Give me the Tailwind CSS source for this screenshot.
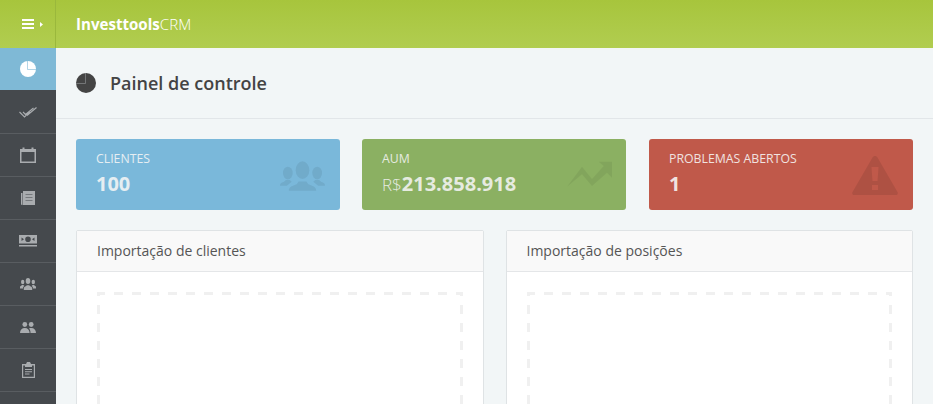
<!DOCTYPE html>
<html lang="en">
<head>
    <meta charset="UTF-8">
    <title>InvesttoolsCRM</title>
    <script src="https://cdn.jsdelivr.net/npm/@tailwindcss/browser@4"></script>
</head>
<body class="h-[404px] overflow-hidden bg-[#f2f6f7] font-['Open_Sans',sans-serif] text-[#444]">
    <header class="flex h-12 bg-gradient-to-b from-[#a7c53c] to-[#b1cd50]">
        <div class="flex w-14 items-center gap-[6px] border-r border-[#9ab83c] pl-[22px]">
            <svg class="h-[10px] w-3 shrink-0" viewBox="0 0 12 10" fill="#fff"><rect width="12" height="2"/><rect y="4" width="12" height="2"/><rect y="8" width="12" height="2"/></svg>
            <svg class="h-[5px] w-[3px] shrink-0" viewBox="0 0 3 5" fill="#fff"><path d="M0 0l3 2.500-3 2.500z"/></svg>
        </div>
        <div class="flex items-center pl-5 text-[15.1px] text-white"><b class="font-bold">Investtools</b><span class="font-light">CRM</span></div>
    </header>
    <div class="flex h-[356px] overflow-hidden">
        <nav class="w-14 shrink-0 bg-[#45494d] text-[#a9acaf]">
            <a class="flex h-[42px] items-center justify-center bg-[#7fb9d6]">
                <svg class="h-4 w-4" viewBox="0 0 16 16"><circle cx="8" cy="8" r="8" fill="#fff"/><path d="M7.500 0v8.500H16" fill="none" stroke="#7fb9d6" stroke-width="0.6"/></svg>
            </a>
            <a class="flex h-[44px] items-center justify-center border-b border-[#595d61]">
                <svg class="h-3 w-[18px]" viewBox="0 0 18 12" fill="none" stroke="currentColor" stroke-width="1.1"><path d="M.5 6l5 5 5.500-5.500M4 6l2.500 2.500M6.500 8.500l8-6.500M8 9.500L17.500 1.500"/></svg>
            </a>
            <a class="flex h-[43px] items-center justify-center border-b border-[#595d61]">
                <svg class="h-4 w-4" viewBox="0 0 16 16" fill="currentColor"><path fill-rule="evenodd" d="M0 2h2.500V.5h2V2h7V.5h2V2H16v14H0zM1.500 5v9.500h13V5z"/></svg>
            </a>
            <a class="flex h-[43px] items-center justify-center border-b border-[#595d61]">
                <svg class="h-[14px] w-[14px]" viewBox="0 0 14 14" fill="currentColor"><path d="M0 2h1.500v12H1a1 1 0 0 1-1-1z"/><path d="M2 0h12v14H2z"/><path d="M4.500 3.500h7M4.500 6.500h7M4.500 9.500h7" stroke="#75787c" stroke-width="1"/></svg>
            </a>
            <a class="flex h-[43px] items-center justify-center border-b border-[#595d61]">
                <svg class="h-3 w-[18px]" viewBox="0 0 18 12" fill="currentColor"><path fill-rule="evenodd" d="M0 0h18v8.500H0zM9 1.500a2.800 2.800 0 1 0 0 5.600 2.800 2.800 0 0 0 0-5.600zM2.500 2.500L5 4.300 2.500 6zM15.500 2.500L13 4.300l2.500 1.700z"/><rect y="10" width="18" height="1.500"/></svg>
            </a>
            <a class="flex h-[43px] items-center justify-center border-b border-[#595d61]">
                <svg class="h-[12px] w-4" viewBox="0 0 16 12" fill="currentColor"><ellipse cx="8" cy="3" rx="2.300" ry="3"/><path d="M3.800 12V10c0-1.500 2.500-1.700 3-2.800h2.400c.5 1.100 3 1.300 3 2.800v2z"/><ellipse cx="2.700" cy="4" rx="1.700" ry="2.300"/><ellipse cx="13.300" cy="4" rx="1.700" ry="2.300"/><path d="M0 10.500V9c0-1 1.500-1.300 2-2h1.400c.3.400.6.700 1 .9C3.200 8.600 3 9.500 3 10.500zM16 10.500V9c0-1-1.500-1.300-2-2h-1.400c-.3.400-.6.700-1 .9 1.200.7 1.400 1.600 1.400 2.600z"/></svg>
            </a>
            <a class="flex h-[43px] items-center justify-center border-b border-[#595d61]">
                <svg class="h-[11px] w-4" viewBox="0 0 16 11" fill="currentColor"><circle cx="4.800" cy="2.500" r="2.400"/><circle cx="11.200" cy="2.500" r="2.400"/><path d="M0 11c0-3 1.800-5 4.800-5s4.800 2 4.800 5z"/><path d="M10.500 11c0-2-.5-3.500-1.500-4.500.6-.4 1.300-.5 2.200-.5 3 0 4.800 2 4.800 5z"/></svg>
            </a>
            <a class="flex h-[43px] items-center justify-center border-b border-[#595d61]">
                <svg class="h-4 w-[13px]" viewBox="0 0 13 16" fill="currentColor"><path fill-rule="evenodd" d="M0 2h4l1-2h3l1 2h4v14H0zM1.200 3.500v11.300h10.600V3.500H10V5H3V3.500zM3 7v1h7V7zM3 9.300v1h7v-1zM3 11.600v1h4.500v-1z"/></svg>
            </a>
        </nav>
        <main class="min-w-0 flex-1">
            <div class="flex h-[71px] items-center gap-[14px] border-b border-[#e2e6e9] pl-5">
                <svg class="h-5 w-5" viewBox="0 0 20 20"><circle cx="10" cy="10" r="10" fill="#444"/><path d="M9.500 0v10.500H0" fill="none" stroke="#8a8c8e" stroke-width="0.7"/></svg>
                <h1 class="text-lg font-semibold leading-none">Painel de controle</h1>
            </div>
            <div class="flex gap-[22px] px-5 pt-5">
                <div class="relative h-[71px] w-[264px] rounded-[3px] bg-[#7ab8da] px-5 pt-3 text-[#e6eef2]">
                    <div class="text-[12.3px] leading-4">CLIENTES</div>
                    <div class="mt-[5px] text-[20px] font-bold leading-6">100</div>
                    <svg class="absolute right-[15px] top-[22px] h-[30px] w-[45px]" viewBox="0 0 46 30" fill="#000" fill-opacity="0.07"><ellipse cx="23" cy="9" rx="7" ry="9"/><path d="M9 30c0-3 2-4.500 8-6.500l2-3h8l2 3c6 2 8 3.500 8 6.500z"/><ellipse cx="8" cy="12" rx="5" ry="6.500"/><path d="M0 25c0-2 1-3 4-4l2-2h4l2 2-5 4z"/><ellipse cx="38" cy="12" rx="5" ry="6.500"/><path d="M46 25c0-2-1-3-4-4l-2-2h-4l-2 2 5 4z"/></svg>
                </div>
                <div class="relative h-[71px] w-[264px] rounded-[3px] bg-[#8bb062] px-5 pt-3 text-[#e6ebe0]">
                    <div class="text-[12.3px] leading-4">AUM</div>
                    <div class="mt-[5px] text-[20px] leading-6"><span class="text-[17px] font-light">R$</span><b class="font-bold">213.858.918</b></div>
                    <svg class="absolute right-[14px] top-[22px] h-[26px] w-[45px]" viewBox="0 0 45 26" fill="#000" fill-opacity="0.06"><path d="M0 25.700L15 5.700 25 18 36.700 5 31.700.7H45V16.700L40 11.700 25 25 15 13.300z"/></svg>
                </div>
                <div class="relative ml-px h-[71px] w-[264px] rounded-[3px] bg-[#c0594a] px-5 pt-3 text-[#f0e3e0]">
                    <div class="text-[12.3px] leading-4">PROBLEMAS ABERTOS</div>
                    <div class="mt-[5px] text-[20px] font-bold leading-6">1</div>
                    <svg class="absolute right-[15px] top-[17px] h-[39px] w-[46px]" viewBox="0 0 46 39" fill="#000" fill-opacity="0.09"><path fill-rule="evenodd" d="M23 0c1 0 2 .5 2.500 1.500L45.500 36c.8 1.500 0 3-1.500 3H2c-1.500 0-2.300-1.500-1.500-3L20.500 1.500C21 .5 22 0 23 0zM19.500 11l1 14h5l1-14zM20 29v5h6v-5z"/></svg>
                </div>
            </div>
            <div class="grid grid-cols-2 gap-x-[22px] px-5 pt-5">
                <section class="rounded-t-[2px] border border-[#dfe3e5] bg-white pb-5">
                    <h2 class="flex h-[41px] items-center border-b border-[#e4e6e8] bg-[#f9f9f9] px-5 text-sm text-[#555]">Importação de clientes</h2>
                    <svg class="mx-5 mt-5 h-[150px] w-[366px]" fill="none" stroke="#f0f0f0" stroke-width="3" stroke-dasharray="9 9"><path stroke-dashoffset="1" d="M0 1.500H366"/><path stroke-dashoffset="5" d="M1.500 0V150M364.500 0V150"/></svg>
                </section>
                <section class="rounded-t-[2px] border border-[#dfe3e5] bg-white pb-5">
                    <h2 class="flex h-[41px] items-center border-b border-[#e4e6e8] bg-[#f9f9f9] px-5 text-sm text-[#555]">Importação de posições</h2>
                    <svg class="mx-5 mt-5 h-[150px] w-[365px]" fill="none" stroke="#f0f0f0" stroke-width="3" stroke-dasharray="9 9"><path stroke-dashoffset="1" d="M0 1.500H365"/><path stroke-dashoffset="5" d="M1.500 0V150M363.500 0V150"/></svg>
                </section>
            </div>
        </main>
    </div>
</body>
</html>
